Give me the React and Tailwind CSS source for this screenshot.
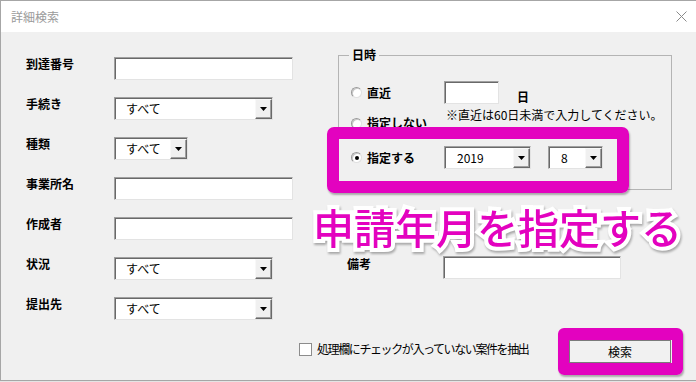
import React from "react";

function Field({ w }) {
  return (
    <div
      className={`h-[23px] ${w} bg-white border border-t-[#a0a0a0] border-l-[#a0a0a0] border-b-[#e3e3e3] border-r-[#e3e3e3] shadow-[inset_1px_1px_0_#696969]`}
    />
  );
}

function Select({ w, value, pl }) {
  return (
    <div
      className={`h-[23px] ${w} bg-white border border-t-[#a0a0a0] border-l-[#a0a0a0] border-b-[#e3e3e3] border-r-[#e3e3e3] shadow-[inset_1px_1px_0_#696969] flex items-end pb-0`}
    >
      <span className={`flex-1 self-center ${pl} text-[12px] leading-[14px]`}>{value}</span>
      <div className="w-[17px] h-[20px] bg-[#f0f0f0] border border-t-[#f8f8f8] border-l-[#f8f8f8] border-b-[#696969] border-r-[#696969] shadow-[inset_-1px_-1px_0_#a0a0a0] flex items-center justify-center">
        <svg width="7" height="4" viewBox="0 0 7 4">
          <path d="M0 0H7L3.5 4Z" fill="#000" />
        </svg>
      </div>
    </div>
  );
}

function Radio({ checked }) {
  return (
    <div className="w-[11px] h-[11px] rounded-full bg-white border border-t-[#9a9a9a] border-l-[#9a9a9a] border-b-[#e0e0e0] border-r-[#e0e0e0] shadow-[inset_1px_1px_0_#c8c8c8] flex items-center justify-center shrink-0">
      {checked && <div className="w-[4px] h-[4px] rounded-full bg-black" />}
    </div>
  );
}

function Row({ label, children }) {
  return (
    <div className="flex items-start h-[23px]">
      <div className="w-[88px] text-[12px] font-bold leading-[14px]">{label}</div>
      {children}
    </div>
  );
}

export default function App() {
  return (
    <div className="w-[696px] h-[382px] bg-[#e4e4e4] overflow-hidden font-['Noto_Sans_CJK_JP','Noto_Sans',sans-serif] text-black">
      <div className="relative w-[696px] h-[381px] border-t border-l border-b border-[#a6a6a6] bg-[#f0f0f0] flex flex-col">
        {/* Title bar */}
        <div className="h-[31px] bg-white flex items-center justify-between pl-[10px] pr-[8px] shrink-0">
          <span className="text-[12px] leading-[14px] text-[#9a9a9a]">詳細検索</span>
          <svg width="11" height="11" viewBox="0 0 11 11" className="mr-[1px]">
            <path d="M0.5 0.5L10.5 10.5M10.5 0.5L0.5 10.5" stroke="#8a8a8a" strokeWidth="1" />
          </svg>
        </div>

        {/* Body */}
        <div className="flex-1 flex flex-col">
          <div className="flex items-start">
            {/* Left column */}
            <div className="w-[337px] pl-[25px] pt-[25px] flex flex-col gap-[17px] shrink-0">
              <Row label="到達番号">
                <Field w="w-[179px]" />
              </Row>
              <Row label="手続き">
                <Select w="w-[159px]" value="すべて" pl="pl-[11px]" />
              </Row>
              <Row label="種類">
                <Select w="w-[74px]" value="すべて" pl="pl-[11px]" />
              </Row>
              <Row label="事業所名">
                <Field w="w-[179px]" />
              </Row>
              <Row label="作成者">
                <Field w="w-[179px]" />
              </Row>
              <Row label="状況">
                <Select w="w-[159px]" value="すべて" pl="pl-[11px]" />
              </Row>
              <Row label="提出先">
                <Select w="w-[159px]" value="すべて" pl="pl-[11px]" />
              </Row>
            </div>

            {/* Right column */}
            <div className="pt-[23px] flex flex-col">
              <div className="relative w-[334px] h-[135px] border border-[#b4b4b4] pl-[12px] pt-[25px]">
                <span className="absolute -top-[8px] left-[10px] px-[3px] bg-[#f0f0f0] text-[12px] font-bold leading-[14px]">
                  日時
                </span>

                {/* Row 1 */}
                <div className="flex items-center h-[23px]">
                  <div className="w-[93px] flex items-center gap-[5px]">
                    <Radio />
                    <span className="text-[12px] font-bold leading-[14px]">直近</span>
                  </div>
                  <Field w="w-[55px]" />
                  <span className="self-end ml-[18px] text-[12px] font-bold leading-[14px]">日</span>
                </div>

                {/* Row 2 */}
                <div className="flex items-start mt-[4px] h-[14px]">
                  <div className="w-[93px] flex items-center gap-[5px] mt-[8px] h-[14px]">
                    <Radio />
                    <span className="text-[12px] font-bold leading-[14px]">指定しない</span>
                  </div>
                  <span className="ml-[2px] text-[12px] leading-[14px]">※直近は60日未満で入力してください。</span>
                </div>

                {/* Row 3 */}
                <div className="flex items-center h-[23px] mt-[24px]">
                  <div className="w-[93px] flex items-center gap-[5px]">
                    <Radio checked />
                    <span className="text-[12px] font-bold leading-[14px]">指定する</span>
                  </div>
                  <Select w="w-[87px]" value="2019" pl="pl-[12px]" />
                  <div className="ml-[17px]">
                    <Select w="w-[55px]" value="8" pl="pl-[12px]" />
                  </div>
                </div>

                {/* Highlight frame */}
                <div className="absolute left-[-12px] top-[71px] w-[302px] h-[66px] border-[12px] border-[#e302bf] rounded-[7px] shadow-[1px_2px_2px_rgba(0,0,0,0.3)]" />
              </div>

              {/* 備考 */}
              <div className="flex items-start mt-[66px] pl-[9px]">
                <span className="w-[96px] text-[12px] font-bold leading-[14px] pt-[1px]">備考</span>
                <Field w="w-[178px]" />
              </div>
            </div>
          </div>

          {/* Bottom row */}
          <div className="flex items-start mt-[20px] pl-[298px] pr-[25px]">
            <div className="flex items-center gap-[5px] mt-[2px] h-[14px]">
              <div className="w-[13px] h-[13px] bg-white border border-[#8c8c8c]" />
              <span className="text-[12px] leading-[14px] tracking-[-1.4px]">処理欄にチェックが入っていない案件を抽出</span>
            </div>
            <div className="relative ml-auto">
              <div className="w-[102px] h-[23px] bg-[#f1f1f1] border border-[#7a7a7a] flex items-center justify-center text-[12px] leading-[14px]">
                検索
              </div>
              <div className="absolute -left-[11px] -top-[12px] -right-[12px] -bottom-[12px] border-[11px] border-t-[12px] border-b-[12px] border-[#e302bf] rounded-[6px] shadow-[1px_2px_2px_rgba(0,0,0,0.3)]" />
            </div>
          </div>
        </div>

        {/* Annotation text */}
        <div className="absolute left-[312px] top-[203px] text-[41px] leading-[44px] font-medium text-[#e302bf] [-webkit-text-stroke:8px_white] [paint-order:stroke_fill] drop-shadow-[1px_2px_1px_rgba(0,0,0,0.3)] whitespace-nowrap">
          申請年月を指定する
        </div>
      </div>
    </div>
  );
}
